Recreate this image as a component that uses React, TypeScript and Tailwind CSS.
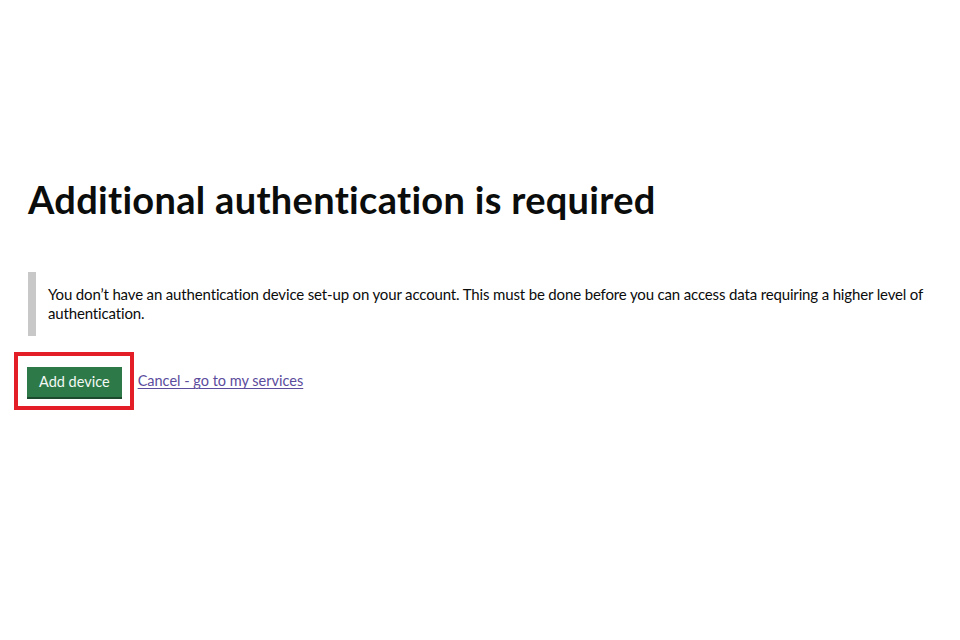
export default function App() {
  return (
    <div className="min-h-screen w-full bg-white text-[#0b0c0c] font-['Lato','Noto_Sans',sans-serif]">
      <div className="pl-[28px] pr-[20px] pt-[173px]">
        <h1 className="text-[38px] font-bold leading-[52px] tracking-[0.3px]">
          Additional authentication is required
        </h1>

        <div className="mt-[47px] border-l-[8px] border-[#c8c8c8] pl-[12px] py-[13px] text-[15px] leading-[19px] tracking-[-0.15px]">
          You don’t have an authentication device set-up on your account. This must be done before you
          can access data requiring a higher level of authentication.
        </div>

        <div className="mt-[16px] flex items-center -ml-[14px]">
          <div className="border-[4px] border-[#e41e26] pl-[9px] pr-[8px] pt-[11px] pb-[9px]">
            <button className="bg-[#2d7a48] text-[#f4f8f5] text-[14.5px] px-[12px] h-[30px] shadow-[0_2px_0_#1b4a2c]">
              Add device
            </button>
          </div>
          <a href="#" className="ml-[4px] text-[14.5px] text-[#5b4c9d] underline underline-offset-2">
            Cancel - go to my services
          </a>
        </div>
      </div>
    </div>
  );
}
